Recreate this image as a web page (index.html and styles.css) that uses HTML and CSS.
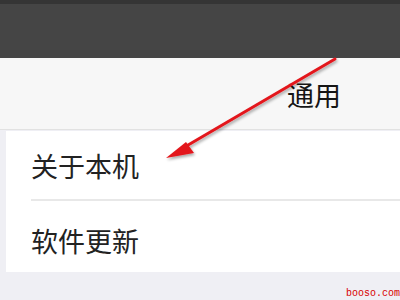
FILE: index.html
```html
<!DOCTYPE html>
<html lang="zh">
<head>
<meta charset="utf-8">
<link rel="stylesheet" href="styles.css">
</head>
<body>
<div class="screen">
  <div class="status"></div>
  <div class="navbar"></div>
  <div class="header"><span class="title">通用</span></div>
  <div class="list">
    <div class="row first"><span>关于本机</span></div>
    <div class="sep"></div>
    <div class="row second"><span>软件更新</span></div>
  </div>
  <svg class="arrow" width="400" height="300" viewBox="0 0 400 300">
    <defs>
      <filter id="sh" x="-20%" y="-20%" width="140%" height="140%">
        <feGaussianBlur in="SourceAlpha" stdDeviation="1.5"/>
        <feOffset dx="1" dy="2" result="b"/>
        <feComponentTransfer><feFuncA type="linear" slope="0.35"/></feComponentTransfer>
        <feMerge><feMergeNode/><feMergeNode in="SourceGraphic"/></feMerge>
      </filter>
    </defs>
    <g filter="url(#sh)">
      <line x1="335" y1="59" x2="183" y2="148" stroke="#e3161b" stroke-width="3" stroke-linecap="round"/>
      <polygon points="166,158 186,142 194,153" fill="#e3161b"/>
    </g>
  </svg>
  <div class="mark">booso.com</div>
</div>
</body>
</html>
```

FILE: styles.css
```css
html, body {
  margin: 0;
  padding: 0;
}
body {
  width: 400px;
  height: 300px;
  overflow: hidden;
  background: #efeff4;
  font-family: "Noto Sans CJK SC", "Noto Sans", sans-serif;
}
.screen {
  position: relative;
  width: 400px;
  height: 300px;
}
.status {
  height: 4px;
  background: #353535;
}
.navbar {
  height: 54px;
  background: #454545;
}
.header {
  height: 72px;
  background: #f7f7f7;
  border-bottom: 1px solid #e2e2e2;
  display: flex;
  align-items: center;
  padding-left: 287px;
  box-sizing: border-box;
}
.title {
  font-size: 27px;
  color: #151515;
  line-height: 1;
  margin-top: 2px;
}
.list {
  margin-left: 6px;
  margin-top: 1px;
  background: #fff;
  height: 141px;
  display: flex;
  flex-direction: column;
}
.row {
  display: flex;
  align-items: center;
  padding-left: 25px;
  font-size: 27px;
  color: #222;
  line-height: 1;
  box-sizing: border-box;
}
.row.first { height: 68px; padding-top: 1px; }
.row.second { height: 71px; padding-top: 8px; }
.sep {
  height: 2px;
  margin-left: 25px;
  background: #e8e8e8;
}
.arrow {
  position: absolute;
  left: 0;
  top: 0;
}
.mark {
  position: absolute;
  right: 0;
  bottom: 1px;
  font-family: "Liberation Mono", monospace;
  font-size: 10px;
  line-height: 1;
  color: #d80000;
}
```
